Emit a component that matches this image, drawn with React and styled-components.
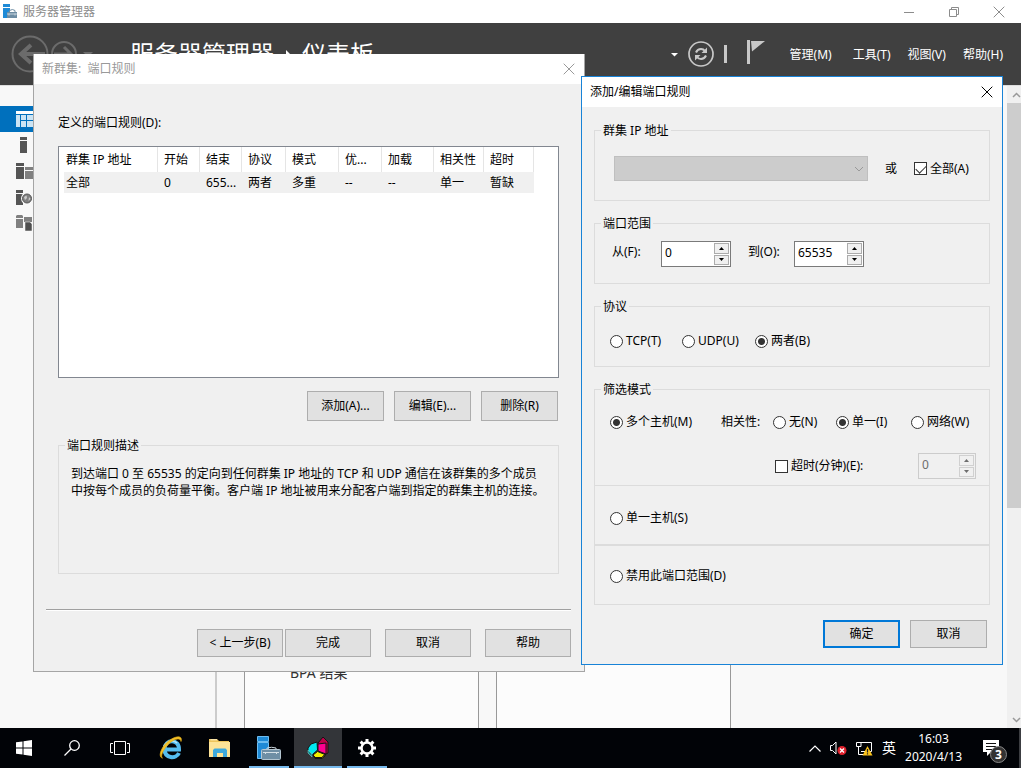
import React, {useState} from 'react';
import styled, {createGlobalStyle} from 'styled-components';

const columns = [
  {title: '群集 IP 地址', width: 94, value: '全部'},
  {title: '开始', width: 42, value: '0'},
  {title: '结束', width: 42, value: '655...'},
  {title: '协议', width: 44, value: '两者'},
  {title: '模式', width: 53, value: '多重'},
  {title: '优...', width: 43, value: '--'},
  {title: '加载', width: 52, value: '--'},
  {title: '相关性', width: 50, value: '单一'},
  {title: '超时', width: 50, value: '暂缺'}
];

const CloseIcon = ({size = 12}) => (
  <svg width={size} height={size} viewBox="0 0 12 12" stroke="currentColor" fill="none">
    <path d="M.7 .7L11.3 11.3M11.3 .7L.7 11.3" />
  </svg>
);

const ServerIcon = () => (
  <svg width="15" height="15" viewBox="0 0 15 15">
    <path d="M0 0H7V3H0zM0 4H7V7L4 9V14H0z" fill="#1e8ad6" />
    <path d="M6.500 8V6.500Q9.500 4.500 12 6.500V8" fill="none" stroke="#6d8ca3" />
    <path d="M4 8H14V14H4z" fill="#6d8ca3" />
    <path d="M4 10H14M6 9.500V11.500M12 9.500V11.500" stroke="#c4d2dc" fill="none" />
  </svg>
);

const Spinner = ({label, value, onChange, disabled, width = 70}) => (
  <SpinBox $width={width} $disabled={disabled}>
    <SpinInput aria-label={label} value={value} disabled={disabled} onChange={e => onChange(e.target.value)} />
    <SpinButtons $disabled={disabled}>
      <SpinButton type="button" aria-label="+" disabled={disabled} onClick={() => onChange(String(Number(value) + 1))}>
        <svg width="5" height="3" viewBox="0 0 5 3"><path d="M0 3L2.500 0L5 3z" fill="currentColor" /></svg>
      </SpinButton>
      <SpinButton type="button" aria-label="-" disabled={disabled} onClick={() => onChange(String(Math.max(0, Number(value) - 1)))}>
        <svg width="5" height="3" viewBox="0 0 5 3"><path d="M0 0L2.500 3L5 0z" fill="currentColor" /></svg>
      </SpinButton>
    </SpinButtons>
  </SpinBox>
);

const Choice = ({name, value, current, onPick, children}) => (
  <ChoiceLabel>
    <Radio name={name} checked={current === value} onChange={() => onPick(value)} />
    {children}
  </ChoiceLabel>
);

const ServerManager = () => (
  <Manager>
    <TitleBar>
      <AppName><ServerIcon />服务器管理器</AppName>
      <Caption>
        <CaptionButton type="button" aria-label="最小化">
          <svg width="12" height="12" viewBox="0 0 12 12"><path d="M1 6.500H11" stroke="currentColor" /></svg>
        </CaptionButton>
        <CaptionButton type="button" aria-label="还原">
          <svg width="12" height="12" viewBox="0 0 12 12" fill="none" stroke="currentColor">
            <path d="M1.500 3.500H8.500V10.500H1.500zM3.500 3.500V1.500H10.500V8.500H8.500" />
          </svg>
        </CaptionButton>
        <CaptionButton type="button" aria-label="关闭"><CloseIcon /></CaptionButton>
      </Caption>
    </TitleBar>
    <Header>
      <svg width="84" height="40" viewBox="0 0 84 40" fill="none" stroke="#6b6b6b">
        <circle cx="20" cy="20" r="17.500" strokeWidth="2" />
        <path d="M35 20H11M21 11L11 20L21 29" strokeWidth="4" />
        <circle cx="54" cy="20" r="12" strokeWidth="2" />
        <path d="M44 20H61M54 13L61 20L54 27" strokeWidth="3" />
        <path d="M73 18H83L78 23z" fill="#6b6b6b" stroke="none" />
      </svg>
      <PageTitle>
        服务器管理器
        <svg width="28" height="24" viewBox="0 0 28 24"><path d="M12 8L17 13L12 18z" fill="#fff" /></svg>
        仪表板
      </PageTitle>
      <HeaderTools>
        <svg width="96" height="32" viewBox="0 0 96 32">
          <path d="M0 15H7L3.500 18.500z" fill="#fff" />
          <g fill="none" stroke="#c8c8c8">
            <circle cx="30" cy="16" r="12" strokeWidth="1.700" />
            <path d="M25 14.500Q26.500 11 30 11Q32.500 11 34 13M35 17.500Q33.500 21 30 21Q27.500 21 26 19" strokeWidth="2" />
          </g>
          <path d="M36 9.500V15H30.500zM24 22.500V17H29.500z" fill="#c8c8c8" />
          <path d="M54.500 7V25" stroke="#c8c8c8" strokeWidth="3" />
          <path d="M76 2H79V26H76zM80 3H94L81 13.500z" fill="#c8c8c8" />
        </svg>
      </HeaderTools>
      <Menu>
        <MenuItem href="#manage">管理(M)</MenuItem>
        <MenuItem href="#tools">工具(T)</MenuItem>
        <MenuItem href="#view">视图(V)</MenuItem>
        <MenuItem href="#help">帮助(H)</MenuItem>
      </Menu>
    </Header>
    <Workspace>
      <Sidebar>
        <SideItem href="#dashboard" $active aria-label="仪表板">
          <svg width="17" height="16" viewBox="0 0 17 16">
            <path d="M0 0H17V3H0z" fill="#fff" />
            <path d="M0 4H4V16H0zM5 4H10V9H5zM11 4H17V9H11zM5 10H10V16H5zM11 10H17V16H11z" fill="#cbe4f4" />
          </svg>
        </SideItem>
        <SideItem href="#local" aria-label="本地服务器">
          <svg width="17" height="16" viewBox="0 0 17 16"><path d="M4 0H11V3H4zM4 4H11V16H4z" fill="#555" /></svg>
        </SideItem>
        <SideItem href="#all" aria-label="所有服务器">
          <svg width="17" height="16" viewBox="0 0 17 16">
            <path d="M0 0H8V3H0zM0 4H8V16H0z" fill="#555" />
            <path d="M9 4H17V7H9zM9 8H17V16H9z" fill="#808080" />
          </svg>
        </SideItem>
        <SideItem href="#iis" aria-label="IIS">
          <svg width="17" height="16" viewBox="0 0 17 16">
            <path d="M0 1H7V4H0zM0 5H7V16H0z" fill="#555" />
            <circle cx="11" cy="9.500" r="6" fill="#f8f8f8" />
            <circle cx="11" cy="9.500" r="4.500" fill="#808080" stroke="#555" />
            <path d="M8 8L10.500 6.500L11 9L9 11zM13 8L14.500 10L12.500 12z" fill="#ccc" />
          </svg>
        </SideItem>
        <SideItem href="#files" aria-label="文件和存储服务">
          <svg width="17" height="16" viewBox="0 0 17 16">
            <path d="M0 1L1 0H6L7 1V3H0zM0 4H7V13H0zM8 2H16V7H8z" fill="#808080" />
            <path d="M9 7H14L16 9V16H9z" fill="#505050" stroke="#f8f8f8" strokeWidth=".5" />
          </svg>
        </SideItem>
      </Sidebar>
      <Tiles>
        <Tile>BPA 结果</Tile>
        <Tile />
      </Tiles>
      <Scrollbar>
        <ScrollArrow>
          <svg width="9" height="6" viewBox="0 0 9 6"><path d="M1 5L4.500 1.500L8 5" fill="none" stroke="#999" strokeWidth="1.500" /></svg>
        </ScrollArrow>
        <ScrollThumb />
        <ScrollTrack />
        <ScrollArrow>
          <svg width="9" height="6" viewBox="0 0 9 6"><path d="M1 1L4.500 4.500L8 1" fill="none" stroke="#999" strokeWidth="1.500" /></svg>
        </ScrollArrow>
      </Scrollbar>
    </Workspace>
  </Manager>
);

const WizardDialog = () => (
  <WizardWindow aria-label="新群集: 端口规则">
    <DialogTitle $inactive>
      新群集:  端口规则
      <DialogClose type="button" aria-label="关闭"><CloseIcon /></DialogClose>
    </DialogTitle>
    <WizardBody>
      <ListLabel id="rules-label">定义的端口规则(D):</ListLabel>
      <ListBox>
        <RulesTable aria-labelledby="rules-label">
          <colgroup>
            {columns.map(c => <Col key={c.title} $width={c.width} />)}
          </colgroup>
          <thead>
            <tr>{columns.map(c => <HeadCell key={c.title}>{c.title}</HeadCell>)}</tr>
          </thead>
          <tbody>
            <tr>{columns.map(c => <Cell key={c.title}>{c.value}</Cell>)}</tr>
          </tbody>
        </RulesTable>
      </ListBox>
      <ListActions>
        <Button type="button" $width={77} $height={30}>添加(A)...</Button>
        <Button type="button" $width={77} $height={30}>编辑(E)...</Button>
        <Button type="button" $width={77} $height={30}>删除(R)</Button>
      </ListActions>
      <Group $height={137}>
        <Legend>端口规则描述</Legend>
        <Description>
          到达端口 0 至 65535 的定向到任何群集 IP 地址的 TCP 和 UDP 通信在该群集的多个成员中按每个成员的负荷量平衡。客户端 IP 地址被用来分配客户端到指定的群集主机的连接。
        </Description>
      </Group>
      <Divider />
      <WizardActions>
        <StepButtons>
          <Button type="button" $width={86}>&lt; 上一步(B)</Button>
          <Button type="button" $width={86}>完成</Button>
        </StepButtons>
        <Button type="button" $width={86}>取消</Button>
        <Button type="button" $width={86}>帮助</Button>
      </WizardActions>
    </WizardBody>
  </WizardWindow>
);

const RuleDialog = () => {
  const [all, setAll] = useState(true);
  const [from, setFrom] = useState('0');
  const [to, setTo] = useState('65535');
  const [protocol, setProtocol] = useState('both');
  const [mode, setMode] = useState('multiple');
  const [affinity, setAffinity] = useState('single');
  const [timeout, setTimeoutOn] = useState(false);
  const [minutes, setMinutes] = useState('0');

  return (
    <RuleWindow aria-label="添加/编辑端口规则">
      <DialogTitle>
        添加/编辑端口规则
        <DialogClose type="button" aria-label="关闭"><CloseIcon /></DialogClose>
      </DialogTitle>
      <RuleBody>
        <Groups>
          <Group $height={79}>
            <Legend>群集 IP 地址</Legend>
            <AddressRow>
              <SelectBox>
                <Select aria-label="群集 IP 地址" disabled={all}><option></option></Select>
                <SelectArrow width="10" height="6" viewBox="0 0 10 6"><path d="M1 1L5 5L9 1" fill="none" stroke="#999" /></SelectArrow>
              </SelectBox>
              <span>或</span>
              <ChoiceLabel>
                <Checkbox checked={all} onChange={e => setAll(e.target.checked)} />
                全部(A)
              </ChoiceLabel>
            </AddressRow>
          </Group>
          <Group $height={69}>
            <Legend>端口范围</Legend>
            <RangeRow>
              <span>从(F):</span>
              <Spinner label="从(F)" value={from} onChange={setFrom} />
              <span>到(O):</span>
              <Spinner label="到(O)" value={to} onChange={setTo} />
            </RangeRow>
          </Group>
          <Group $height={69}>
            <Legend>协议</Legend>
            <ProtocolRow>
              <Choice name="protocol" value="tcp" current={protocol} onPick={setProtocol}>TCP(T)</Choice>
              <Choice name="protocol" value="udp" current={protocol} onPick={setProtocol}>UDP(U)</Choice>
              <Choice name="protocol" value="both" current={protocol} onPick={setProtocol}>两者(B)</Choice>
            </ProtocolRow>
          </Group>
          <FilterGroups>
            <Group $height={105}>
              <Legend>筛选模式</Legend>
              <ModeRow>
                <Choice name="mode" value="multiple" current={mode} onPick={setMode}>多个主机(M)</Choice>
                <span>相关性:</span>
                <Choice name="affinity" value="none" current={affinity} onPick={setAffinity}>无(N)</Choice>
                <Choice name="affinity" value="single" current={affinity} onPick={setAffinity}>单一(I)</Choice>
                <Choice name="affinity" value="network" current={affinity} onPick={setAffinity}>网络(W)</Choice>
              </ModeRow>
              <TimeoutRow>
                <ChoiceLabel>
                  <Checkbox checked={timeout} onChange={e => setTimeoutOn(e.target.checked)} />
                  超时(分钟)(E):
                </ChoiceLabel>
                <Spinner label="超时(分钟)(E)" value={minutes} onChange={setMinutes} disabled={!timeout} width={58} />
              </TimeoutRow>
            </Group>
            <ModeBox>
              <Choice name="mode" value="host" current={mode} onPick={setMode}>单一主机(S)</Choice>
            </ModeBox>
            <ModeBox $last>
              <Choice name="mode" value="disabled" current={mode} onPick={setMode}>禁用此端口范围(D)</Choice>
            </ModeBox>
          </FilterGroups>
        </Groups>
        <RuleActions>
          <Button type="button" $width={77} $primary>确定</Button>
          <Button type="button" $width={77}>取消</Button>
        </RuleActions>
      </RuleBody>
    </RuleWindow>
  );
};

const SystemTaskbar = () => (
  <Taskbar>
    <ShellButtons>
      <Task type="button" aria-label="开始">
        <svg width="16" height="16" viewBox="0 0 16 16" fill="#fff">
          <path d="M0 2.300L6.500 1.400V7.500H0zM7.500 1.200L16 0V7.500H7.500zM0 8.500H6.500V14.600L0 13.700zM7.500 8.500H16V16L7.500 14.800z" />
        </svg>
      </Task>
      <Task type="button" aria-label="搜索">
        <svg width="16" height="16" viewBox="0 0 16 16" fill="none" stroke="#fff" strokeWidth="1.300">
          <circle cx="10.500" cy="5.500" r="4.800" /><path d="M7 9L.5 15.500" />
        </svg>
      </Task>
      <Task type="button" aria-label="任务视图">
        <svg width="20" height="14" viewBox="0 0 20 14" fill="none" stroke="#fff">
          <path d="M4.500 .5H15.500V13.500H4.500zM3 2.500H.5V11.500H3M17 2.500H19.500V11.500H17" />
        </svg>
      </Task>
    </ShellButtons>
    <PinnedApps>
      <Task type="button" aria-label="Internet Explorer">
        <svg width="24" height="24" viewBox="0 0 24 24" fill="none">
          <path d="M6 13.500H20C20.500 2.500 6 2.500 5.500 13C5.500 22.500 17 23.500 20 17" stroke="#55bdf0" strokeWidth="4" />
          <path d="M5 10C8 4 15 4 18 7" stroke="#b4e6fb" strokeWidth="1.500" />
          <path d="M3.500 22C-2 21 3 9 11 4C17 0 24 -1 22 5.500C21.500 0 12 4 7 11C3 16 1.500 21 3.500 22z" fill="#f4c22b" stroke="#e0a912" strokeWidth=".7" />
        </svg>
      </Task>
      <Task type="button" aria-label="文件资源管理器">
        <svg width="22" height="20" viewBox="0 0 22 20">
          <path d="M0 1H8L10 3H20V19H0z" fill="#eec45b" />
          <path d="M0 4H21V19H0z" fill="#fde397" />
          <path d="M1.500 1.800H8" stroke="#fff4c8" />
          <path d="M4 19V12L5.500 10.500H16.500L18 12V19H14V15H8V19z" fill="#3da9dd" />
        </svg>
      </Task>
      <Task type="button" aria-label="服务器管理器" $running>
        <svg width="24" height="24" viewBox="0 0 24 24">
          <path d="M.5 .5H11.500V5.500H.5zM.5 6.500H11.500V22.500H.5z" fill="#1e8ad6" stroke="#6dbdf0" />
          <path d="M10 13.500V12Q14.500 10.500 19 12V13.500" fill="none" stroke="#cdd8df" />
          <rect x="4.500" y="13.500" width="19" height="10" rx="1" fill="#6f8fa5" stroke="#b4c6d1" />
          <path d="M6 16.500H22M8.500 16V18M19.500 16V18" stroke="#d5e0e6" />
        </svg>
      </Task>
      <Task type="button" aria-label="网络负载平衡管理器" $active>
        <svg width="22" height="22" viewBox="0 0 22 22" stroke="#151515" strokeLinejoin="round">
          <path d="M11 6L16 0L21 5V16L17 18L11 14z" fill="#c00048" />
          <path d="M11 7L19 6V17L11 14z" fill="#ff0090" />
          <path d="M1 11L4 7L10 5L10.500 13L5 18L1 15z" fill="#00e8f0" />
          <path d="M1 13L5 17V20L1 16z" fill="#188" stroke="#7cc" strokeWidth=".6" />
          <path d="M6 18L10.500 14.500L18 17.500L15 20.500H8z" fill="#f2f000" />
          <path d="M6 18L8 20.500H15L18 17.500V19L15 21.500H8z" fill="#a9a400" />
        </svg>
      </Task>
      <Task type="button" aria-label="设置" $running>
        <svg width="20" height="20" viewBox="0 0 20 20" fill="none" stroke="#fff">
          <circle cx="10" cy="10" r="5.500" strokeWidth="2.500" />
          <path d="M10 1V4M10 16V19M1 10H4M16 10H19M3.600 3.600L5.700 5.700M14.300 14.300L16.400 16.400M3.600 16.400L5.700 14.300M14.300 5.700L16.400 3.600" strokeWidth="3" />
        </svg>
      </Task>
    </PinnedApps>
    <Tray>
      <svg width="12" height="7" viewBox="0 0 12 7"><path d="M.5 6.500L6 1L11.500 6.500" fill="none" stroke="#fff" strokeWidth="1.200" /></svg>
      <svg width="17" height="14" viewBox="0 0 17 14">
        <path d="M.5 4.500H2.500L6 1V13L2.500 9.500H.5z" fill="none" stroke="#fff" />
        <circle cx="12" cy="9.500" r="4.500" fill="#e0202c" />
        <path d="M10 7.500L14 11.500M14 7.500L10 11.500" stroke="#fff" strokeWidth="1.300" />
      </svg>
      <svg width="17" height="15" viewBox="0 0 17 15">
        <path d="M5 1.500H15.500V10.500H5M.5 1.500H5V5.500H.5zM2.500 5.500V13.500H9" fill="none" stroke="#fff" />
        <path d="M11.500 5L16.500 14.500H6.500z" fill="#f9c21c" />
        <path d="M11.500 8V11.500M11.500 12.300V13.500" stroke="#222" strokeWidth="1.200" />
      </svg>
      <Language>英</Language>
      <Clock><span>16:03</span><span>2020/4/13</span></Clock>
      <Notifications type="button" aria-label="通知">
        <svg width="16" height="16" viewBox="0 0 16 16">
          <path d="M0 0H16V12H8L4 16V12H0z" fill="#fff" />
          <path d="M3 3.500H13M3 6.500H13M3 9.500H9" stroke="#111" />
        </svg>
        <Badge>3</Badge>
      </Notifications>
    </Tray>
  </Taskbar>
);

const App = () => (
  <Desktop>
    <GlobalStyle />
    <ServerManager />
    <WizardDialog />
    <RuleDialog />
    <SystemTaskbar />
  </Desktop>
);

export default App;

const GlobalStyle = createGlobalStyle`
  * {
    box-sizing: border-box;
  }

  body {
    margin: 0;
    font-family: "Noto Sans", "Noto Sans CJK SC", sans-serif;
    font-size: 12px;
    line-height: 18px;
    color: #000;
  }

  button, input, select {
    font: inherit;
    color: inherit;
  }

  svg {
    display: block;
    flex-shrink: 0;
  }
`

const Desktop = styled.div`
  position: relative;
  min-height: 100vh;
  display: flex;
  flex-direction: column;
  overflow: hidden;
`

const Manager = styled.main`
  flex: 1;
  display: flex;
  flex-direction: column;
  background-color: #f8f8f8;
`

const TitleBar = styled.div`
  height: 23px;
  padding-left: 3px;
  display: flex;
  justify-content: space-between;
  align-items: center;
  background-color: #fff;
  color: #8c8c8c;
`

const AppName = styled.div`
  display: flex;
  align-items: center;
  gap: 5px;
`

const Caption = styled.div`
  display: flex;
`

const CaptionButton = styled.button`
  width: 45px;
  height: 20px;
  padding: 0;
  display: flex;
  align-items: center;
  justify-content: center;
  border: none;
  background: none;
`

const Header = styled.header`
  height: 62px;
  padding: 0 18px 0 10px;
  display: flex;
  align-items: center;
  background-color: #404040;
  color: #fff;
`

const PageTitle = styled.h1`
  margin: 0 0 0 36px;
  display: flex;
  align-items: center;
  font-size: 24px;
  font-weight: normal;
  line-height: 30px;
`

const HeaderTools = styled.div`
  margin-left: auto;
`

const Menu = styled.nav`
  margin-left: 23px;
  padding-top: 2px;
  display: flex;
  gap: 17px;
`

const MenuItem = styled.a`
  color: #fff;
  text-decoration: none;

  &:first-child {
    margin-right: 4px;
  }
`

const Workspace = styled.div`
  flex: 1;
  display: flex;
  border-top: 1px solid #ddd;
`

const Sidebar = styled.nav`
  width: 217px;
  padding-top: 20px;
  border-right: 2px solid #ccc;
`

const SideItem = styled.a`
  height: 26px;
  padding-left: 16px;
  display: flex;
  align-items: center;
  background-color: ${props => props.$active ? '#0070bd' : 'transparent'};
`

const Tiles = styled.div`
  flex: 1;
  padding-left: 27px;
  display: flex;
  gap: 17px;
`

const Tile = styled.section`
  width: 235px;
  padding: 0 0 45px 45px;
  display: flex;
  flex-direction: column;
  justify-content: flex-end;
  border: solid #999;
  border-width: 0 1px;
  background-color: #fcfcfc;
  color: #333;
  font-size: 14px;
  line-height: 20px;
`

const Scrollbar = styled.div`
  width: 14px;
  display: flex;
  flex-direction: column;
  background-color: #f0f0f0;
`

const ScrollArrow = styled.div`
  height: 17px;
  display: flex;
  align-items: center;
  justify-content: flex-end;
`

const ScrollThumb = styled.div`
  flex: 2;
  background-color: #cdcdcd;
`

const ScrollTrack = styled.div`
  flex: 1;
`

const Window = styled.section`
  position: absolute;
  background-color: #f0f0f0;
`

const WizardWindow = styled(Window)`
  left: 33px;
  top: 54px;
  width: 552px;
  border: solid #a5a5a5;
  border-width: 0 1px 1px;
`

const RuleWindow = styled(Window)`
  left: 581px;
  top: 76px;
  width: 422px;
  border: 1px solid #1883d7;
`

const DialogTitle = styled.div`
  height: 30px;
  padding: 0 9px 0 8px;
  display: flex;
  align-items: center;
  justify-content: space-between;
  white-space: pre;
  background-color: #fff;
  color: ${props => props.$inactive ? '#999' : '#000'};
`

const DialogClose = styled.button`
  padding: 0;
  border: none;
  background: none;
`

const WizardBody = styled.div`
  padding: 30px 25px 14px 24px;
`

const ListLabel = styled.div`
  margin-bottom: 14px;
`

const ListBox = styled.div`
  height: 232px;
  padding: 0 5px;
  border: 1px solid #828790;
  background-color: #fff;
`

const RulesTable = styled.table`
  width: 470px;
  table-layout: fixed;
  border-collapse: separate;
  border-spacing: 0;
`

const Col = styled.col`
  width: ${props => props.$width}px;
`

const HeadCell = styled.th`
  height: 25px;
  padding: 0 0 0 6px;
  border-right: 1px solid #e5e5e5;
  font-weight: normal;
  text-align: left;
  white-space: nowrap;

  &:first-child {
    padding-left: 2px;
  }
`

const Cell = styled.td`
  height: 21px;
  padding: 0 0 0 6px;
  background-color: #f0f0f0;
  white-space: nowrap;

  &:first-child {
    padding-left: 2px;
  }
`

const ListActions = styled.div`
  margin: 13px 0 16px;
  padding-right: 1px;
  display: flex;
  justify-content: flex-end;
  gap: 10px;
`

const Button = styled.button`
  width: ${props => props.$width}px;
  height: ${props => props.$height || 28}px;
  padding: 0;
  border: ${props => props.$primary ? '2px solid #0078d7' : '1px solid #adadad'};
  background-color: #e1e1e1;
`

const Group = styled.fieldset`
  min-width: 0;
  height: ${props => props.$height}px;
  margin: 0;
  padding: 0 6px;
  border: 1px solid #dcdcdc;
`

const Legend = styled.legend`
  height: 16px;
  padding: 0 2px;
  line-height: 18px;
`

const Description = styled.p`
  margin: 12px 6px 0;
  line-height: 17px;
`

const Divider = styled.hr`
  margin: 35px -12px 18px;
  border: solid;
  border-width: 1px 0;
  border-color: #a0a0a0 transparent #fff;
`

const WizardActions = styled.div`
  margin-right: -12px;
  display: flex;
  justify-content: flex-end;
  gap: 14px;
`

const StepButtons = styled.div`
  display: flex;
  gap: 2px;
`

const RuleBody = styled.div`
  padding: 15px 12px 16px;
`

const Groups = styled.div`
  display: flex;
  flex-direction: column;
  gap: 14px;
`

const AddressRow = styled.div`
  padding: 18px 0 0 13px;
  display: flex;
  align-items: center;
  gap: 17px;
`

const SelectBox = styled.div`
  position: relative;
  width: 254px;
  height: 25px;
`

const Select = styled.select`
  width: 100%;
  height: 100%;
  appearance: none;
  border: 1px solid #bfbfbf;
  border-radius: 0;
  background-color: #ccc;
  opacity: 1;
`

const SelectArrow = styled.svg`
  position: absolute;
  right: 4px;
  top: 10px;
  pointer-events: none;
`

const ChoiceLabel = styled.label`
  display: flex;
  align-items: center;
  gap: 3px;
  white-space: nowrap;
`

const Radio = styled.input.attrs({type: 'radio'})`
  width: 13px;
  height: 13px;
  margin: 0;
  appearance: none;
  border: 1px solid #333;
  border-radius: 50%;
  background-color: #fff;

  &:checked {
    background-image: radial-gradient(circle, #333 3px, transparent 4px);
  }
`

const Checkbox = styled.input.attrs({type: 'checkbox'})`
  width: 13px;
  height: 13px;
  margin: 0;
  appearance: none;
  border: 1px solid #333;
  background-color: #fff;

  &:checked::after {
    content: '';
    display: block;
    width: 9px;
    height: 5px;
    margin: 2px 1px;
    border: solid #333;
    border-width: 0 0 1px 1px;
    transform: rotate(-45deg);
  }
`

const RangeRow = styled.div`
  padding: 10px 0 0 11px;
  display: grid;
  grid-template-columns: 49px 87px 46px auto;
  justify-content: start;
  line-height: 22px;
`

const SpinBox = styled.div`
  width: ${props => props.$width}px;
  height: 26px;
  display: flex;
  border: 1px solid ${props => props.$disabled ? '#ccc' : '#7a7a7a'};
  background-color: ${props => props.$disabled ? '#f0f0f0' : '#fff'};
  color: ${props => props.$disabled ? '#6d6d6d' : '#000'};
`

const SpinInput = styled.input`
  flex: 1;
  min-width: 0;
  padding: 0 3px 2px;
  border: none;
  background: none;
  line-height: 22px;
`

const SpinButtons = styled.div`
  width: 17px;
  padding: 1px;
  display: flex;
  flex-direction: column;
  gap: 1px;
  background-color: ${props => props.$disabled ? '#f0f0f0' : '#fff'};
`

const SpinButton = styled.button`
  flex: 1;
  padding: 0;
  display: flex;
  align-items: center;
  justify-content: center;
  border: 1px solid ${props => props.disabled ? '#d0d0d0' : '#acacac'};
  background-color: #f0f0f0;
`

const ProtocolRow = styled.div`
  padding: 18px 0 0 9px;
  display: grid;
  grid-template-columns: 72px 73px auto;
  justify-content: start;
`

const FilterGroups = styled.div`
  display: flex;
  flex-direction: column;
`

const ModeRow = styled.div`
  padding: 16px 0 0 9px;
  display: grid;
  grid-template-columns: 111px 52px 63px 75px auto;
  justify-content: start;
`

const TimeoutRow = styled.div`
  padding: 22px 7px 0 174px;
  display: flex;
  justify-content: space-between;
`

const ModeBox = styled.div`
  height: ${props => props.$last ? 60 : 59}px;
  padding: ${props => props.$last ? 2 : 6}px 0 0 15px;
  display: flex;
  align-items: center;
  border: 1px solid #dcdcdc;
  border-top-width: ${props => props.$last ? 1 : 0}px;
`

const RuleActions = styled.div`
  margin-top: 15px;
  padding-right: 3px;
  display: flex;
  justify-content: flex-end;
  gap: 10px;
`

const Taskbar = styled.footer`
  height: 40px;
  display: flex;
  background-color: #010307;
  color: #fff;
`

const ShellButtons = styled.div`
  display: flex;
`

const PinnedApps = styled.nav`
  margin-left: 3px;
  display: flex;
  gap: 1px;
`

const Task = styled.button`
  position: relative;
  width: 48px;
  height: 40px;
  padding: 0;
  display: flex;
  align-items: center;
  justify-content: center;
  border: none;
  background-color: ${props => props.$active ? '#333539' : 'transparent'};

  &::after {
    content: '';
    position: absolute;
    bottom: 0;
    left: ${props => props.$active ? 0 : 4}px;
    right: ${props => props.$active ? 0 : 4}px;
    height: 2px;
    background-color: ${props => props.$active || props.$running ? '#76b9ed' : 'transparent'};
  }
`

const Tray = styled.div`
  margin-left: auto;
  padding-right: 20px;
  display: flex;
  align-items: center;
  gap: 9px;
  border-right: 2px solid #3c3e42;
`

const Language = styled.span`
  font-size: 14px;
`

const Clock = styled.time`
  display: flex;
  flex-direction: column;
  align-items: center;
`

const Notifications = styled.button`
  position: relative;
  width: 16px;
  margin-left: 12px;
  padding: 0;
  border: none;
  background: none;
`

const Badge = styled.span`
  position: absolute;
  left: 7px;
  top: 6px;
  width: 17px;
  height: 17px;
  border: 1px solid #888;
  border-radius: 50%;
  background-color: #333;
  color: #fff;
  font-weight: bold;
  line-height: 15px;
  text-align: center;
`
